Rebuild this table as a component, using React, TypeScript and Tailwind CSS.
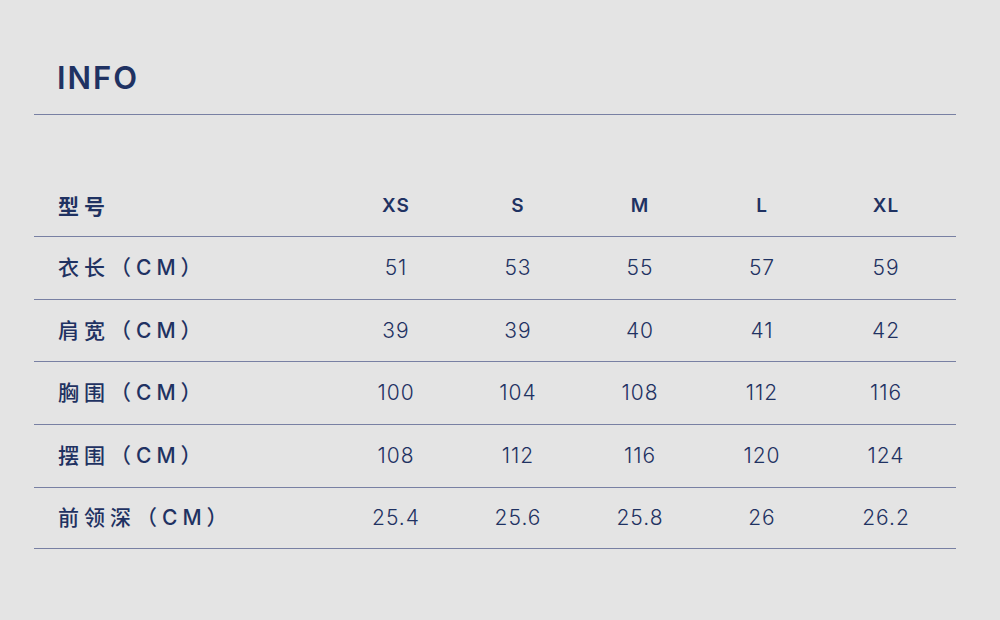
import React from "react";

const sizes = ["XS", "S", "M", "L", "XL"];
const rows: [string, string[], string][] = [
  ["衣长（CM）", ["51", "53", "55", "57", "59"], "h-[63px]"],
  ["肩宽（CM）", ["39", "39", "40", "41", "42"], "h-[62px]"],
  ["胸围（CM）", ["100", "104", "108", "112", "116"], "h-[63px]"],
  ["摆围（CM）", ["108", "112", "116", "120", "124"], "h-[63px]"],
  ["前领深（CM）", ["25.4", "25.6", "25.8", "26", "26.2"], "h-[61px]"],
];

const font = { fontFamily: "Inter, 'Noto Sans CJK SC', sans-serif" };

export default function App() {
  return (
    <div
      className="w-[1000px] h-[620px] bg-[#e4e4e4] text-[#1f3262] px-[34px] pt-[60px]"
      style={font}
    >
      <div className="pl-[23px] h-[54px] text-[31px] font-semibold tracking-[2px] leading-[36px]">
        INFO
      </div>
      <div className="w-[922px] border-b border-[#7880a3]" />
      <div className="mt-[58px] w-[922px]">
        <div className="grid grid-cols-[301px_122px_122px_122px_122px_126px] h-[64px] pt-[4px] items-center border-b border-[#7880a3]">
          <div className="pl-[24px] text-[21px] font-bold tracking-[5px]">型号</div>
          {sizes.map((s) => (
            <div key={s} className="text-center text-[19px] font-semibold tracking-[1px]">
              {s}
            </div>
          ))}
        </div>
        {rows.map(([label, vals, h]) => (
          <div
            key={label}
            className={`grid grid-cols-[301px_122px_122px_122px_122px_126px] ${h} items-center border-b border-[#7880a3]`}
          >
            <div className="pl-[24px] text-[21px] font-medium tracking-[5px]">{label}</div>
            {vals.map((v, i) => (
              <div key={i} className="text-center text-[21px] font-light tracking-[1px]">
                {v}
              </div>
            ))}
          </div>
        ))}
      </div>
    </div>
  );
}
